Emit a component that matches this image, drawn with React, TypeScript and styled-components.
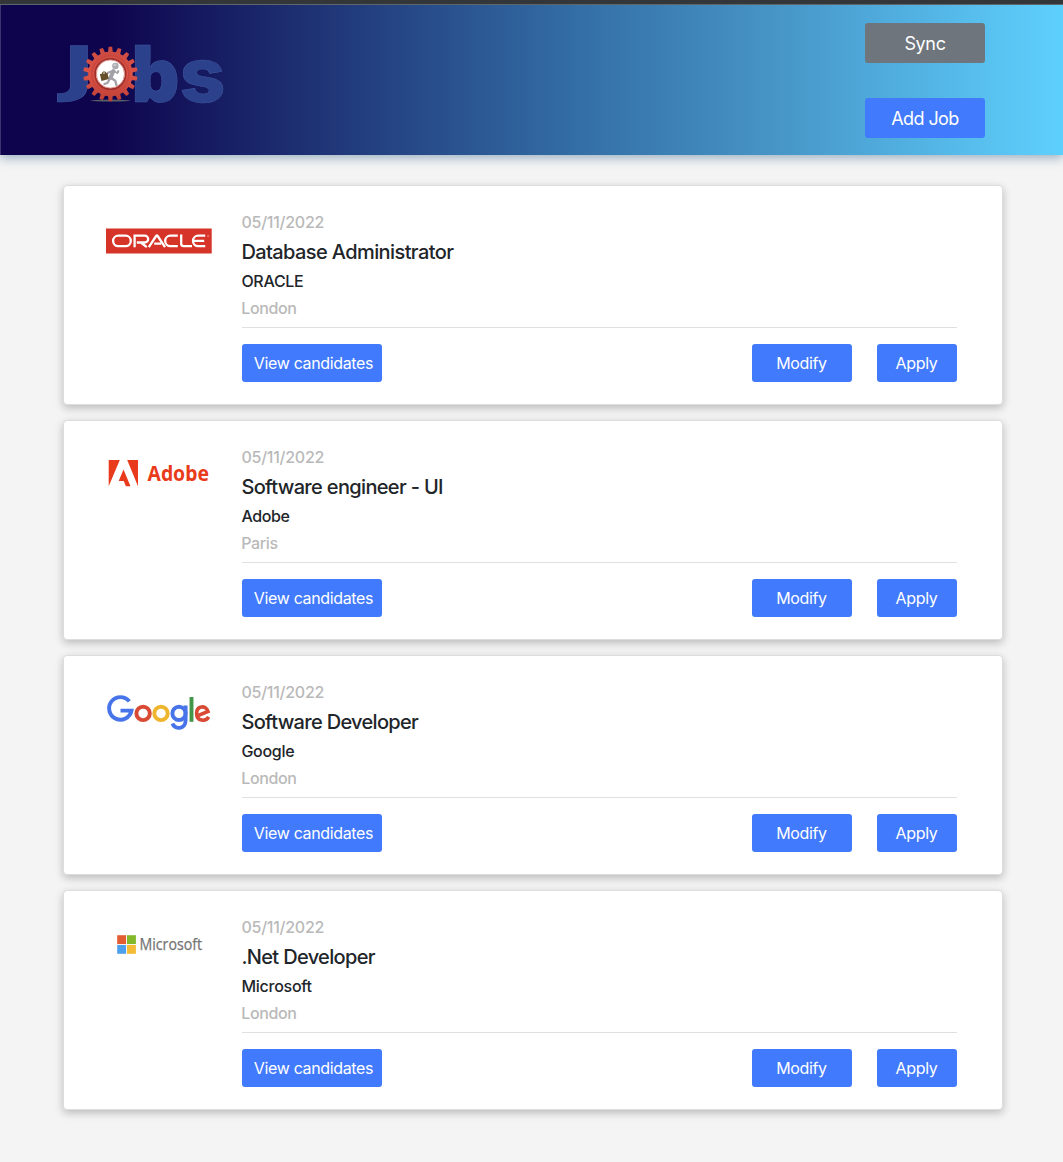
import React from 'react';
import styled, { createGlobalStyle } from 'styled-components';

const GlobalStyle = createGlobalStyle`
  * { box-sizing: border-box; }
  body {
    margin: 0;
    background: #f4f4f4;
    color: #212529;
    font-family: Inter, "Liberation Sans", sans-serif;
    font-size: 16px;
  }
`;

const Page = styled.div`
  min-height: 1162px;
  overflow: hidden;
`;

const WindowEdge = styled.div`
  height: 5px;
  background: #353535;
  border-bottom: 1px solid #66686a;
`;

const Header = styled.header`
  height: 150px;
  display: flex;
  align-items: flex-start;
  justify-content: space-between;
  padding: 18px 78px 17px 49px;
  border-left: 1px solid #3c3670;
  background: linear-gradient(90deg, #0e044e 10%, #3470a7 55%, #448fc1 70%, #5ed0fe 100%);
  box-shadow: 0 3px 10px rgba(40, 90, 135, 0.45);
`;

const HeaderActions = styled.div`
  display: flex;
  flex-direction: column;
  gap: 35px;
`;

const Button = styled.button<{ $width: number; $tone?: 'grey'; $large?: boolean; $tracking?: number; $shift?: number }>`
  width: ${(p) => p.$width}px;
  height: ${(p) => (p.$large ? 40 : 38)}px;
  padding: ${(p) => (p.$large ? '1px 0 0' : '0 0 1px')};
  text-indent: ${(p) => p.$shift ?? 0}px;
  border: 0;
  border-radius: 3px;
  background: ${(p) => (p.$tone === 'grey' ? '#6e757c' : '#417afc')};
  color: #fff;
  font: 400 ${(p) => (p.$large ? 18 : 16)}px Inter, "Liberation Sans", sans-serif;
  letter-spacing: ${(p) => p.$tracking ?? -0.35}px;
  white-space: nowrap;
  cursor: pointer;
`;

const JobList = styled.main`
  display: flex;
  flex-direction: column;
  gap: 15px;
  width: 940px;
  margin: 30px 0 0 63px;
`;

const Card = styled.article`
  display: flex;
  height: 220px;
  padding: 24px 45px 0 40px;
  background: #fff;
  border: 1px solid #dcdddd;
  border-radius: 4px;
  box-shadow: 0 3px 8px rgba(0, 0, 0, 0.24);
`;

const LogoColumn = styled.div`
  flex: 0 0 138px;
`;

const Details = styled.div`
  flex: 1;
`;

const JobDate = styled.div`
  line-height: 24px;
  color: #b9b9b9;
  font-weight: 500;
  letter-spacing: -0.25px;
  text-indent: -0.6px;
`;

const Title = styled.h2<{ $tracking: number }>`
  margin: 6px 0 8px;
  font-size: 20px;
  line-height: 24px;
  font-weight: 500;
  letter-spacing: ${(p) => p.$tracking}px;
  text-indent: -0.6px;
`;

const Company = styled.div<{ $tracking: number }>`
  line-height: 19px;
  font-weight: 500;
  letter-spacing: ${(p) => p.$tracking}px;
  text-indent: -0.6px;
`;

const City = styled.div`
  margin-top: 8px;
  line-height: 19px;
  color: #b9b9b9;
  font-weight: 500;
  letter-spacing: -0.35px;
  text-indent: -0.8px;
`;

const Actions = styled.div`
  display: flex;
  gap: 25px;
  margin-top: 9px;
  padding-top: 16px;
  border-top: 1px solid #e0e0e0;

  & > :first-child { margin-right: auto; }
`;

const Svg = styled.svg`
  display: block;
  overflow: visible;
`;

const gearPath = (() => {
  const teeth = 18;
  const points: string[] = [];
  for (let i = 0; i < teeth; i++) {
    [[-0.3, 22.3], [-0.19, 27.2], [0.19, 27.2], [0.3, 22.3]].forEach(([offset, radius]) => {
      const a = ((i + 0.5 + offset) / teeth) * Math.PI * 2;
      points.push(`${(radius * Math.cos(a)).toFixed(2)},${(radius * Math.sin(a)).toFixed(2)}`);
    });
  }
  return `M${points.join('L')}Z`;
})();

const JobsLogo = () => (
  <Svg width="180" height="90" viewBox="50 23 180 90" aria-label="Jobs">
    <defs>
      <linearGradient id="gearFill" x1="0" y1="0" x2="0" y2="1">
        <stop offset="0" stopColor="#c94940" />
        <stop offset="0.5" stopColor="#dc5347" />
        <stop offset="1" stopColor="#bd4037" />
      </linearGradient>
    </defs>
    <g fill="#2b418b" stroke="#4058a0" strokeWidth="0.5" fontWeight="800">
      <text x="62.500" y="89" fontFamily="'DejaVu Sans', sans-serif" fontSize="60" textLength="33" lengthAdjust="spacingAndGlyphs">J</text>
      <text x="130" y="101.500" fontFamily="'Open Sans', sans-serif" fontSize="73.500" textLength="50.500" lengthAdjust="spacingAndGlyphs">b</text>
      <text x="179.500" y="101.500" fontFamily="Inter, sans-serif" fontSize="76" textLength="46" lengthAdjust="spacingAndGlyphs">s</text>
    </g>
    <ellipse cx="110.500" cy="100.600" rx="20" ry="1" fill="#5b6067" />
    <g transform="translate(110.4 74)">
      <path d={gearPath} fill="url(#gearFill)" />
      <circle r="18.500" fill="none" stroke="#c8463c" strokeWidth="1.500" />
      <circle r="15.200" fill="#fff" stroke="#9f302b" strokeWidth="1.800" />
      <circle r="14.100" fill="#fff" stroke="#cf6258" strokeWidth="0.700" />
      <g fill="none" stroke="#a3a1a7" strokeLinecap="round" strokeLinejoin="round">
        <path d="M3 -3L0 4" strokeWidth="4" />
        <path d="M2 -3L-3 -1L-5 3M3 -3L7 -1L8 -3" strokeWidth="1.900" />
        <path d="M0 4L-3 9L-6 10M1 4L5 7L6 11" strokeWidth="2.300" />
      </g>
      <circle cx="5" cy="-8" r="3.200" fill="#aaa9ae" />
      <circle cx="4.500" cy="-9" r="1.500" fill="#cac9cc" />
      <path d="M-10.500 0L-3 -1L-1.500 5L-9 7Z" fill="#65502b" />
      <path d="M-8 0L-7.500 -2L-5 -2L-4.500 0" fill="none" stroke="#65502b" />
    </g>
  </Svg>
);

const OracleLogo = () => (
  <Svg width="110" height="60" viewBox="104 210 110 60" aria-label="Oracle">
    <rect x="106" y="228.500" width="105.700" height="25" fill="#d63429" />
    <g fill="none" stroke="#fff" strokeWidth="2.300">
      <path d="M118.300 235.700h7.300a5.200 5.200 0 0 1 0 10.400h-7.300a5.200 5.200 0 0 1 0 -10.400Z" />
      <path d="M134.600 247.200v-11.500h10.200a3.400 3.400 0 0 1 0 6.800h-8M140.800 242.500l6 4.700" />
      <path d="M148.800 247.200l7.300-11.200q.8-1 1.600 0l7.300 11.200M154.200 243.600h7" />
      <path d="M177.800 235.700h-7.400a5.200 5.200 0 0 0 0 10.400h7.400M181.200 234.600v9.200q0 2.300 2.300 2.300h8.500" />
      <path d="M205.200 235.700h-7a5.200 5.200 0 0 0 0 10.400h7M193.700 240.900h10.500" />
    </g>
    <circle cx="208.200" cy="236" r="0.800" fill="none" stroke="#f3aaa4" strokeWidth="0.500" />
  </Svg>
);

const AdobeLogo = () => (
  <Svg width="110" height="60" viewBox="104 445 110 60" aria-label="Adobe">
    <g fill="#e93b1b">
      <path d="M108.700 460h11.100l-11.100 26.200ZM127.200 460H138v26.200ZM123.500 469.600l7 16.600h-4.600l-2.100-5.200h-5.100Z" />
      <text x="147.500" y="481" fontFamily="'Noto Sans', sans-serif" fontWeight="700" fontSize="21.500" textLength="61.500" lengthAdjust="spacingAndGlyphs">Adobe</text>
    </g>
  </Svg>
);

const GoogleLogo = () => (
  <Svg width="110" height="60" viewBox="104 680 110 60" aria-label="Google">
    <g fill="none" strokeWidth="3.900">
      <path d="M129.300 701.400A11.300 11.300 0 1 0 131.500 710.600H120.500" stroke="#4775e9" />
      <circle cx="143.100" cy="713.400" r="6.700" stroke="#d94a35" />
      <circle cx="161" cy="713.400" r="6.700" stroke="#efb52f" />
      <circle cx="179" cy="713.400" r="6.600" stroke="#4775e9" />
      <path d="M185.600 705.400V720.500C185.600 729.500 174.700 730 172.500 723.500" stroke="#4775e9" />
      <path d="M191.500 697V721.800" stroke="#419648" />
      <path d="M197.300 715.900L208 711.500C205.800 704.600 196.600 705.700 196.600 713.400C196.600 721.200 205.600 722.300 208.700 716.900" stroke="#d94a35" strokeWidth="3.600" />
    </g>
  </Svg>
);

const MicrosoftLogo = () => (
  <Svg width="110" height="60" viewBox="104 915 110 60" aria-label="Microsoft">
    <path fill="#e35d32" d="M117.200 935.200h8.900v8.900h-8.900z" />
    <path fill="#84b82b" d="M127 935.200h8.900v8.900H127z" />
    <path fill="#4da0ed" d="M117.200 945h8.900v8.800h-8.900z" />
    <path fill="#f4bc35" d="M127 945h8.900v8.800H127z" />
    <text x="139.500" y="950" fill="#747474" stroke="#747474" strokeWidth="0.250" fontFamily="'Open Sans', sans-serif" fontWeight="500" fontSize="15.500" textLength="62.500" lengthAdjust="spacingAndGlyphs">Microsoft</text>
  </Svg>
);

const jobs = [
  { title: 'Database Administrator', company: 'ORACLE', city: 'London', Logo: OracleLogo, titleTracking: -0.6, companyTracking: -0.3 },
  { title: 'Software engineer - UI', company: 'Adobe', city: 'Paris', Logo: AdobeLogo, titleTracking: -0.66, companyTracking: -0.4 },
  { title: 'Software Developer', company: 'Google', city: 'London', Logo: GoogleLogo, titleTracking: -0.68, companyTracking: -0.3 },
  { title: '.Net Developer', company: 'Microsoft', city: 'London', Logo: MicrosoftLogo, titleTracking: -0.66, companyTracking: -0.25 },
];

export default function App() {
  return (
    <Page>
      <GlobalStyle />
      <WindowEdge />
      <Header>
        <JobsLogo />
        <HeaderActions>
          <Button $width={120} $large $tone="grey">Sync</Button>
          <Button $width={120} $large $tracking={-0.6}>Add Job</Button>
        </HeaderActions>
      </Header>
      <JobList>
        {jobs.map(({ title, company, city, Logo, titleTracking, companyTracking }) => (
          <Card key={company}>
            <LogoColumn>
              <Logo />
            </LogoColumn>
            <Details>
              <JobDate>05/11/2022</JobDate>
              <Title $tracking={titleTracking}>{title}</Title>
              <Company $tracking={companyTracking}>{company}</Company>
              <City>{city}</City>
              <Actions>
                <Button $width={140} $shift={3}>View candidates</Button>
                <Button $width={100} $shift={-1}>Modify</Button>
                <Button $width={80} $shift={-1}>Apply</Button>
              </Actions>
            </Details>
          </Card>
        ))}
      </JobList>
    </Page>
  );
}
